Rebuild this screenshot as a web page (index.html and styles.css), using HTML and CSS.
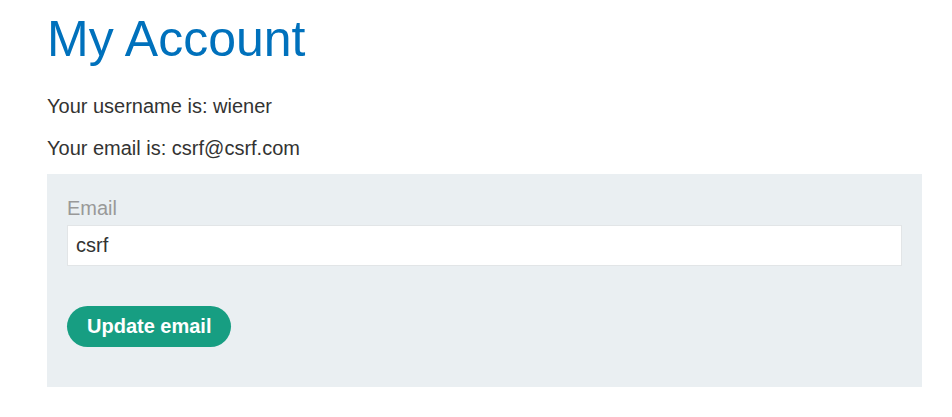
FILE: index.html
```html
<!DOCTYPE html>
<html>
<head>
<meta charset="utf-8">
<link rel="stylesheet" href="styles.css">
</head>
<body>
<div class="container">
  <h1 class="title">My Account</h1>
  <p class="info">Your username is: wiener</p>
  <p class="info">Your email is: csrf@csrf.com</p>
  <form class="panel">
    <label class="label" for="email">Email</label>
    <input class="input" id="email" type="text" value="csrf">
    <button class="button" type="button">Update email</button>
  </form>
</div>
</body>
</html>
```
FILE: styles.css
```css
html, body {
  margin: 0;
  padding: 0;
  background: #ffffff;
}
body {
  font-family: "Liberation Sans", Arial, sans-serif;
  color: #333332;
}
.container {
  padding: 0 30px 0 47px;
}
.title {
  margin: 0;
  padding-top: 10px;
  font-size: 50px;
  font-weight: normal;
  line-height: 58px;
  color: #0071bc;
}
.info {
  margin: 26px 0 0;
  font-size: 20px;
  line-height: 24px;
}
.info + .info {
  margin-top: 18px;
}
.panel {
  margin-top: 14px;
  background: #eaeff2;
  padding: 22px 20px 40px;
  display: flex;
  flex-direction: column;
  align-items: flex-start;
}
.label {
  font-size: 20px;
  line-height: 24px;
  color: #999999;
  margin-bottom: 5px;
}
.input {
  box-sizing: border-box;
  width: 100%;
  height: 41px;
  border: 1px solid #e2e5e7;
  background: #fff;
  padding: 0 8px;
  font-family: "Liberation Sans", Arial, sans-serif;
  font-size: 20px;
  color: #333332;
  outline: none;
}
.button {
  margin-top: 40px;
  height: 41px;
  padding: 0 20px;
  border: none;
  border-radius: 21px;
  background: #179e82;
  color: #ffffff;
  font-family: "Liberation Sans", Arial, sans-serif;
  font-size: 20px;
  font-weight: bold;
}
```
